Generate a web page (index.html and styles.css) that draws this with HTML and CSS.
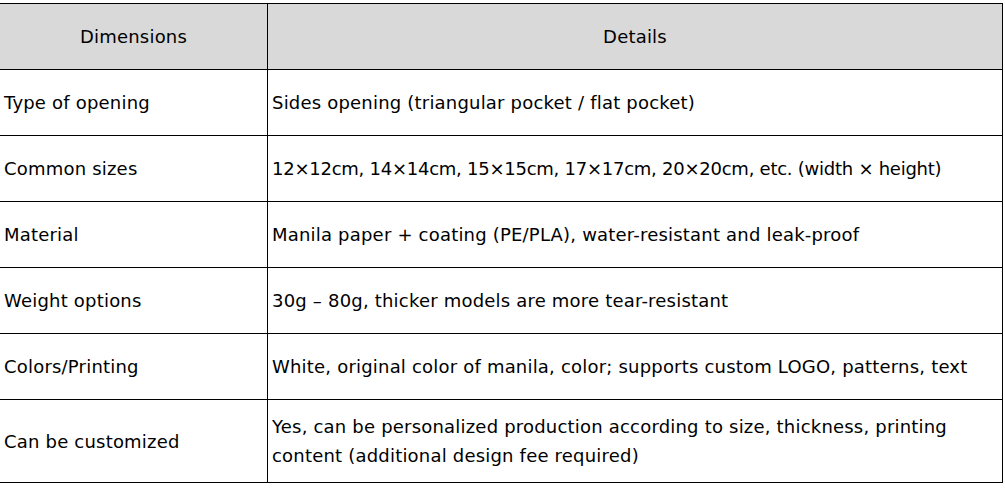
FILE: index.html
```html
<!DOCTYPE html>
<html>
<head>
<meta charset="utf-8">
<link rel="stylesheet" href="styles.css">
</head>
<body>
<table class="spec">
  <thead>
    <tr><th class="c1">Dimensions</th><th class="c2">Details</th></tr>
  </thead>
  <tbody>
    <tr><td>Type of opening</td><td>Sides opening (triangular pocket / flat pocket)</td></tr>
    <tr><td>Common sizes</td><td class="nums">12×12cm, 14×14cm, 15×15cm, 17×17cm, 20×20cm, etc. (width × height)</td></tr>
    <tr><td>Material</td><td>Manila paper + coating (PE/PLA), water-resistant and leak-proof</td></tr>
    <tr><td>Weight options</td><td>30g – 80g, thicker models are more tear-resistant</td></tr>
    <tr><td>Colors/Printing</td><td>White, original color of manila, color; supports custom LOGO, patterns, text</td></tr>
    <tr class="tall"><td>Can be customized</td><td>Yes, can be personalized production according to size, thickness, printing content (additional design fee required)</td></tr>
  </tbody>
</table>
</body>
</html>
```
FILE: styles.css
```css
html, body {
  margin: 0;
  padding: 0;
  background: #ffffff;
}
body {
  font-family: "DejaVu Sans", "Open Sans", sans-serif;
  font-size: 18px;
  letter-spacing: 0.2px;
  color: #000;
}
.spec {
  border-collapse: collapse;
  margin-top: 3px;
  margin-left: -1px;
  table-layout: fixed;
  width: 1004px;
}
.spec th, .spec td {
  border: 1px solid #000;
  padding: 0 4px;
  height: 66px;
  vertical-align: middle;
  box-sizing: border-box;
  line-height: 29px;
}
.spec th {
  background: #d9d9d9;
  font-weight: normal;
  text-align: center;
}
.spec .c1 { width: 268px; }
.spec td { text-align: left; }
.spec td.nums { letter-spacing: -0.25px; }
.spec tr.tall td { height: 83px; }
```
